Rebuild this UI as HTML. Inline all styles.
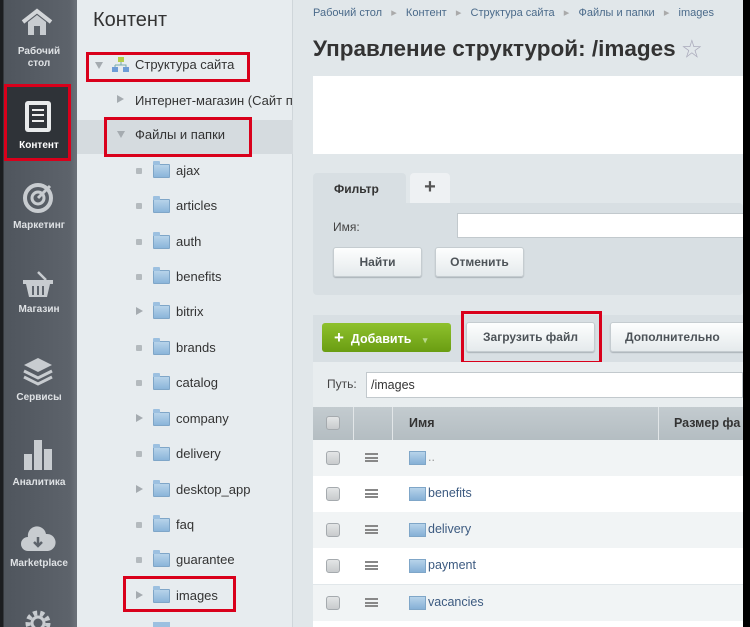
<!DOCTYPE html>
<html style="width:750px;height:627px;overflow:hidden"><head><meta charset="utf-8"><style>
*{margin:0;padding:0;box-sizing:border-box}
body{width:750px;height:627px;overflow:hidden;position:relative;background:#e1e7ea;font-family:"Liberation Sans","Noto Sans CJK SC",sans-serif}
.a{position:absolute}
#sb{left:0;top:0;width:77px;height:627px;background:linear-gradient(90deg,#1b1d20 0,#1b1d20 3px,#4f555d 4px,#5d636b 70px,#6a7078 76px)}
.sl{position:absolute;left:3px;width:72px;text-align:center;color:#dfe2e5;font-size:10px;font-weight:bold;line-height:12px}
#tree{left:77px;top:0;width:216px;height:627px;background:#e7ecef;border-right:1px solid #cfd6da}
.ti{position:absolute;left:176px;font-size:13px;color:#333}
.bul{position:absolute;left:136px;width:6px;height:6px;background:#b4babe;border-radius:1px}
.arr{position:absolute;left:136px;width:0;height:0;border-left:7px solid #a5abb0;border-top:4.5px solid transparent;border-bottom:4.5px solid transparent}
.fo{position:absolute;left:153px;width:17px;height:14px;background:linear-gradient(#b7d3ea,#8bb5da);border:1px solid #7fa6c8;border-radius:1px}
.fo:before{content:"";position:absolute;left:-1px;top:-4px;width:7px;height:4px;background:#9cc0e0;border-radius:1px 1px 0 0}
.red{position:absolute;border:3px solid #d9001b}
.btn{position:absolute;height:30px;background:linear-gradient(#fdfefe,#e5eaec);border:1px solid #c5ccd0;border-radius:3px;box-shadow:0 1px 1px #aab2b7;font-size:12px;font-weight:bold;color:#4d5358;text-align:center;line-height:28px}
.row{position:absolute;left:313px;width:430px;height:36px;overflow:hidden}
.cb{position:absolute;left:13px;top:11px;width:14px;height:14px;border:1px solid #a5aaae;border-radius:3px;background:linear-gradient(#e3e5e6,#c8cbcd)}
.hm{position:absolute;left:52px;top:13px;width:13px;height:9px;border-top:2px solid #888;border-bottom:2px solid #888}
.hm:after{content:"";position:absolute;left:0;top:1.5px;width:13px;height:2px;background:#888}
.rf{position:absolute;left:96px;top:11px;width:17px;height:14px;background:linear-gradient(#b7d3ea,#86b0d6);border:1px solid #7fa6c8}
.rt{position:absolute;left:115px;top:10px;font-size:12.5px;color:#3c5a80}
</style></head><body>
<div id="sb" class="a"></div>
<svg class="a" style="left:20px;top:8px" width="34" height="30" viewBox="0 0 34 30"><path d="M3 14 L17 3 L31 14" fill="none" stroke="#d3d6d9" stroke-width="4"/><path d="M8 14 V27 H26 V14 L17 7Z" fill="#c8ccd0"/><rect x="14" y="18" width="6" height="9" fill="#5a6068"/></svg>
<div class="sl" style="top:46px">Рабочий<br>стол</div>
<div class="a" style="left:4px;top:84px;width:67px;height:77px;background:#2f3338;border:3px solid #d9001b"></div>
<div class="a" style="left:25px;top:101px;width:26px;height:31px;background:#e9ebec;border-radius:3px"><div style="position:absolute;left:4px;top:4px;width:18px;height:23px;background:#31353a"></div><div style="position:absolute;left:7px;top:8px;width:12px;height:13px;border-top:2px solid #eee;border-bottom:2px solid #eee"></div><div style="position:absolute;left:7px;top:13px;width:12px;height:2px;background:#eee"></div></div>
<div class="sl" style="top:140px;color:#fff">Контент</div>
<svg class="a" style="left:22px;top:182px" width="32" height="32"><circle cx="16" cy="16" r="13" fill="none" stroke="#c8ccd0" stroke-width="4"/><circle cx="16" cy="16" r="6" fill="none" stroke="#c8ccd0" stroke-width="3"/><path d="M16 16 L28 4" stroke="#c8ccd0" stroke-width="3"/></svg>
<div class="sl" style="top:220px">Маркетинг</div>
<svg class="a" style="left:22px;top:270px" width="32" height="28"><path d="M16 2 L24 10" stroke="#c8ccd0" stroke-width="2.5"/><rect x="1" y="10" width="30" height="4" fill="#c8ccd0"/><path d="M4 14 H28 L25 27 H7Z" fill="#c8ccd0"/><path d="M11 16V25M16 16V25M21 16V25" stroke="#5d636b" stroke-width="2"/></svg>
<div class="sl" style="top:304px">Магазин</div>
<svg class="a" style="left:22px;top:355px" width="32" height="32"><path d="M16 3L30 10L16 17L2 10Z" fill="#c8ccd0"/><path d="M2 16L16 23L30 16M2 22L16 29L30 22" fill="none" stroke="#c8ccd0" stroke-width="3"/></svg>
<div class="sl" style="top:392px">Сервисы</div>
<svg class="a" style="left:22px;top:440px" width="32" height="30"><rect x="12" y="0" width="8" height="30" fill="#c8ccd0"/><rect x="2" y="14" width="8" height="16" fill="#c8ccd0"/><rect x="22" y="9" width="8" height="21" fill="#c8ccd0"/></svg>
<div class="sl" style="top:477px">Аналитика</div>
<svg class="a" style="left:20px;top:525px" width="36" height="28"><path d="M8 26 A7 7 0 0 1 8 12 A9 9 0 0 1 26 9 A8 8 0 0 1 28 26Z" fill="#c8ccd0"/><path d="M18 12V21M14 17L18 21L22 17" fill="none" stroke="#5d636b" stroke-width="2.5"/></svg>
<div class="sl" style="top:558px">Marketplace</div>
<svg class="a" style="left:23px;top:608px" width="30" height="19"><circle cx="15" cy="15" r="10" fill="none" stroke="#c8ccd0" stroke-width="5" stroke-dasharray="4 3"/><circle cx="15" cy="15" r="6" fill="none" stroke="#c8ccd0" stroke-width="3"/></svg>

<div id="tree" class="a"></div>
<div class="a" style="left:93px;top:9px;font-size:20px;color:#333">Контент</div>
<div class="a" style="left:95px;top:62px;border-top:7px solid #a5abb0;border-left:4.5px solid transparent;border-right:4.5px solid transparent"></div>
<svg class="a" style="left:112px;top:56px" width="17" height="17"><rect x="6" y="1" width="6" height="5" fill="#b3cd4a"/><path d="M9 6V9M3 9H14V11M3 9V11" stroke="#7aa" fill="none"/><rect x="0" y="11" width="6" height="5" fill="#6d9cd6"/><rect x="11" y="11" width="6" height="5" fill="#6d9cd6"/></svg>
<div class="a" style="left:135px;top:57px;font-size:13px;color:#333">Структура сайта</div>
<div class="red" style="left:86px;top:52px;width:164px;height:30px"></div>
<div class="a" style="left:117px;top:95px;border-left:7px solid #a5abb0;border-top:4.5px solid transparent;border-bottom:4.5px solid transparent"></div>
<div class="a" style="left:135px;top:93px;font-size:13px;color:#333;white-space:nowrap;width:158px;overflow:hidden">Интернет-магазин (Сайт по</div>
<div class="a" style="left:77px;top:120px;width:216px;height:34px;background:#d5dbdf"></div>
<div class="a" style="left:117px;top:131px;border-top:7px solid #a5abb0;border-left:4.5px solid transparent;border-right:4.5px solid transparent"></div>
<div class="a" style="left:135px;top:127px;font-size:13px;color:#333">Файлы и папки</div>
<div class="red" style="left:104px;top:117px;width:148px;height:40px"></div>

<div class="bul" style="top:168px"></div><div class="fo" style="top:164px"></div><div class="ti" style="top:163px">ajax</div>
<div class="bul" style="top:203px"></div><div class="fo" style="top:199px"></div><div class="ti" style="top:198px">articles</div>
<div class="bul" style="top:239px"></div><div class="fo" style="top:235px"></div><div class="ti" style="top:234px">auth</div>
<div class="bul" style="top:274px"></div><div class="fo" style="top:270px"></div><div class="ti" style="top:269px">benefits</div>
<div class="arr" style="top:307px"></div><div class="fo" style="top:305px"></div><div class="ti" style="top:304px">bitrix</div>
<div class="bul" style="top:345px"></div><div class="fo" style="top:341px"></div><div class="ti" style="top:340px">brands</div>
<div class="bul" style="top:380px"></div><div class="fo" style="top:376px"></div><div class="ti" style="top:375px">catalog</div>
<div class="arr" style="top:414px"></div><div class="fo" style="top:412px"></div><div class="ti" style="top:411px">company</div>
<div class="bul" style="top:451px"></div><div class="fo" style="top:447px"></div><div class="ti" style="top:446px">delivery</div>
<div class="arr" style="top:485px"></div><div class="fo" style="top:483px"></div><div class="ti" style="top:482px">desktop_app</div>
<div class="bul" style="top:522px"></div><div class="fo" style="top:518px"></div><div class="ti" style="top:517px">faq</div>
<div class="bul" style="top:557px"></div><div class="fo" style="top:553px"></div><div class="ti" style="top:552px">guarantee</div>
<div class="arr" style="top:591px"></div><div class="fo" style="top:589px"></div><div class="ti" style="top:588px">images</div>
<div class="red" style="left:123px;top:576px;width:113px;height:36px"></div>
<div class="a" style="left:153px;top:622px;width:17px;height:5px;background:#9cc0e0"></div>

<div class="a" style="left:313px;top:6px;font-size:11px;color:#4a6a8a;white-space:nowrap">Рабочий стол &nbsp; <span style="color:#aaa">▸</span> &nbsp; Контент &nbsp; <span style="color:#aaa">▸</span> &nbsp; Структура сайта &nbsp; <span style="color:#aaa">▸</span> &nbsp; Файлы и папки &nbsp; <span style="color:#aaa">▸</span> &nbsp; images</div>
<div class="a" style="left:313px;top:33px;font-size:22.5px;font-weight:bold;color:#333;white-space:nowrap">Управление структурой: /images <span style="color:#aab;font-size:20px;font-weight:normal">☆</span></div>
<div class="a" style="left:313px;top:76px;width:430px;height:78px;background:#fff"></div>

<div class="a" style="left:313px;top:173px;width:93px;height:32px;background:#d8dfe3;border-radius:4px 4px 0 0;font-size:12px;font-weight:bold;color:#333;padding:9px 0 0 21px">Фильтр</div>
<div class="a" style="left:410px;top:173px;width:40px;height:30px;background:#eef1f3;border-radius:4px 4px 0 0;font-size:20px;font-weight:bold;color:#555;text-align:center;line-height:28px">+</div>
<div class="a" style="left:313px;top:203px;width:430px;height:92px;background:#d8dfe3;border-radius:0 4px 4px 4px"></div>
<div class="a" style="left:333px;top:220px;font-size:12px;color:#444">Имя:</div>
<div class="a" style="left:457px;top:213px;width:286px;height:25px;background:#fff;border:1px solid #c2c9cd;border-right:none"></div>
<div class="btn" style="left:333px;top:247px;width:89px">Найти</div>
<div class="btn" style="left:435px;top:247px;width:89px">Отменить</div>

<div class="a" style="left:313px;top:315px;width:430px;height:47px;background:#d8dfe3"></div>
<div class="a" style="left:322px;top:323px;width:129px;height:29px;background:linear-gradient(#8ec12d,#6a9d12);border-radius:3px;color:#fff;font-size:12.5px;font-weight:bold;line-height:29px;padding-left:12px"><span style="font-size:17px">+</span>&nbsp; Добавить <span style="color:#b8d98a;font-size:9px;margin-left:8px">▾</span></div>
<div class="btn" style="left:466px;top:322px;width:129px">Загрузить файл</div>
<div class="red" style="left:461px;top:311px;width:141px;height:53px"></div>
<div class="btn" style="left:610px;top:322px;width:140px;text-align:left;padding-left:14px">Дополнительно</div>
<div class="a" style="left:313px;top:362px;width:430px;height:45px;background:#e8edef"></div>
<div class="a" style="left:327px;top:377px;font-size:12px;color:#444">Путь:</div>
<div class="a" style="left:366px;top:372px;width:377px;height:26px;background:#fff;border:1px solid #c2c9cd;font-size:12.5px;color:#333;padding:5px 4px">/images</div>
<div class="a" style="left:313px;top:407px;width:430px;height:33px;background:linear-gradient(#c3cbcf,#b4bdc2)"></div>
<div class="a" style="left:353px;top:407px;width:1px;height:33px;background:#e2e6e8"></div>
<div class="a" style="left:392px;top:407px;width:1px;height:33px;background:#e2e6e8"></div>
<div class="a" style="left:658px;top:407px;width:1px;height:33px;background:#e2e6e8"></div>
<div class="cb" style="left:326px;top:416px"></div>
<div class="a" style="left:409px;top:416px;font-size:12.5px;font-weight:bold;color:#333">Имя</div>
<div class="a" style="left:674px;top:416px;font-size:12.5px;font-weight:bold;color:#333;white-space:nowrap">Размер фа</div>

<div class="row" style="top:440px;background:#f1f4f5"><div class="cb"></div><div class="hm"></div><div class="rf"></div><div class="rt" style="color:#999">..</div></div>
<div class="row" style="top:476px;background:#fff"><div class="cb"></div><div class="hm"></div><div class="rf"></div><div class="rt">benefits</div></div>
<div class="row" style="top:512px;background:#f1f4f5"><div class="cb"></div><div class="hm"></div><div class="rf"></div><div class="rt">delivery</div></div>
<div class="row" style="top:548px;background:#fff"><div class="cb"></div><div class="hm"></div><div class="rf"></div><div class="rt">payment</div></div>
<div class="row" style="top:585px;background:#f1f4f5"><div class="cb"></div><div class="hm"></div><div class="rf"></div><div class="rt">vacancies</div></div>
<div class="row" style="top:621px;height:6px;background:#fff"></div>

<div class="a" style="left:743px;top:0;width:7px;height:627px;background:#000"></div>
</body></html>
